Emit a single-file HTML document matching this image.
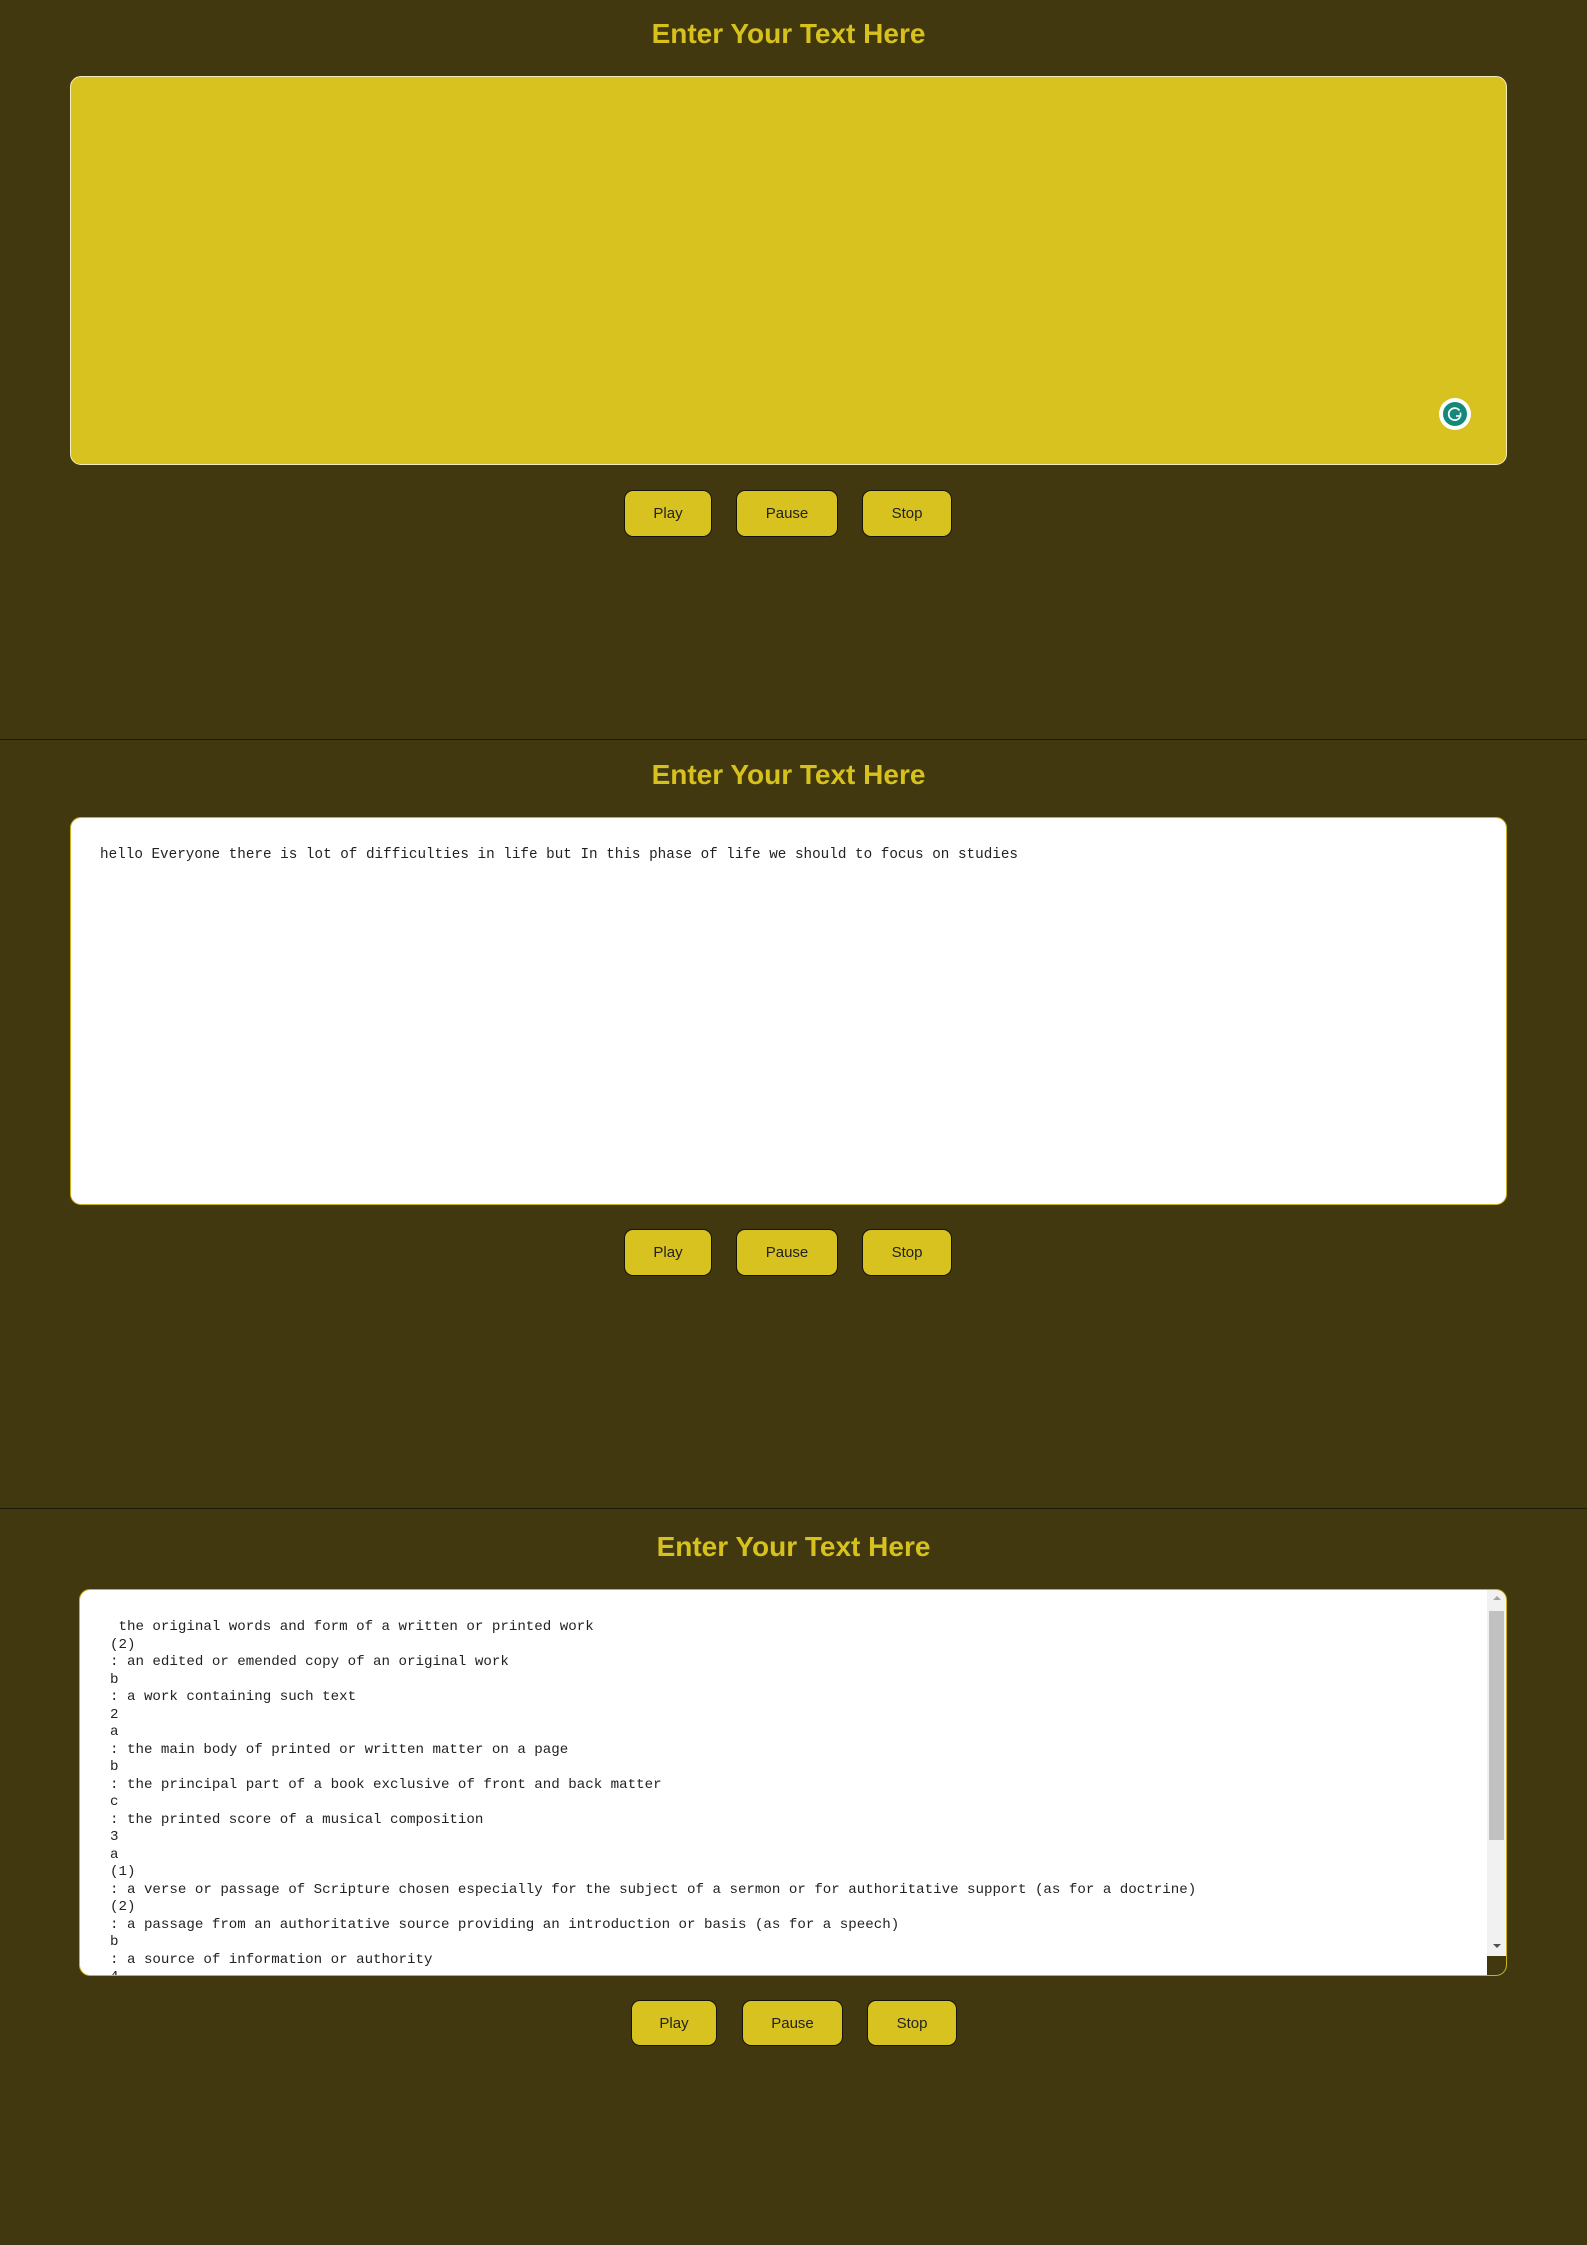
<!DOCTYPE html>
<html><head><meta charset="utf-8">
<style>
html,body{margin:0;padding:0}
body{width:1587px;height:2245px;background:#423810;position:relative;overflow:hidden;font-family:"Liberation Sans",Arial,sans-serif}
.t{position:absolute;left:-5px;width:1587px;text-align:center;color:#d6c11d;font-weight:bold;font-size:28px;line-height:32px}
.ta{position:absolute;box-sizing:border-box;border-radius:11px;overflow:hidden}
.btn{position:absolute;box-sizing:border-box;background:#d8c21f;border:1.5px solid #15130a;border-radius:9px;color:#222;font-size:15px;display:flex;align-items:center;justify-content:center}
.div{position:absolute;left:0;width:1587px;height:1px;background:#1c1a0a}
.mono{font-family:"Liberation Mono","DejaVu Sans Mono",monospace;font-size:14.3px;color:#222;white-space:pre;position:absolute}
</style></head><body>

<div class="t" style="top:18px">Enter Your Text Here</div>
<div class="ta" style="left:70px;top:76px;width:1437px;height:389px;background:#d8c21f;border:1.5px solid #f2ecc0"></div>
<div style="position:absolute;left:1439px;top:398px;width:32px;height:32px;border-radius:50%;background:#fff"></div>
<div style="position:absolute;left:1443px;top:402px;width:24px;height:24px;border-radius:50%;background:#14897a"></div>
<svg style="position:absolute;left:1443px;top:402px" width="24" height="24" viewBox="0 0 24 24"><path d="M16.5 8.5A6 6 0 1 0 17 15" fill="none" stroke="#fff" stroke-width="1.8"/><path d="M13 14h4.5v-3.5" fill="none" stroke="#fff" stroke-width="1.6"/></svg>
<div class="btn" style="left:624px;top:490px;width:88px;height:47px">Play</div>
<div class="btn" style="left:736px;top:490px;width:102px;height:47px">Pause</div>
<div class="btn" style="left:862px;top:490px;width:90px;height:47px">Stop</div>

<div class="div" style="top:739px"></div>

<div class="t" style="top:759px">Enter Your Text Here</div>
<div class="ta" style="left:70px;top:817px;width:1437px;height:388px;background:#fff;border:1.5px solid #c9b21a"></div>
<div class="mono" style="left:100px;top:846px;line-height:18px">hello Everyone there is lot of difficulties in life but In this phase of life we should to focus on studies</div>
<div class="btn" style="left:624px;top:1229px;width:88px;height:47px">Play</div>
<div class="btn" style="left:736px;top:1229px;width:102px;height:47px">Pause</div>
<div class="btn" style="left:862px;top:1229px;width:90px;height:47px">Stop</div>

<div class="div" style="top:1508px"></div>

<div class="t" style="top:1531px;left:0px">Enter Your Text Here</div>
<div class="ta" style="left:79px;top:1589px;width:1428px;height:387px;background:#fff;border:1.5px solid #c9b21a">
<div class="mono" style="left:30px;top:29px;line-height:17.5px;font-size:14.15px"> the original words and form of a written or printed work
(2)
: an edited or emended copy of an original work
b
: a work containing such text
2
a
: the main body of printed or written matter on a page
b
: the principal part of a book exclusive of front and back matter
c
: the printed score of a musical composition
3
a
(1)
: a verse or passage of Scripture chosen especially for the subject of a sermon or for authoritative support (as for a doctrine)
(2)
: a passage from an authoritative source providing an introduction or basis (as for a speech)
b
: a source of information or authority
4</div>
<div style="position:absolute;right:0;top:0;width:19px;height:366px;background:#f1f1f1"></div>
<div style="position:absolute;right:2px;top:21px;width:15px;height:229px;background:#c1c1c1"></div>
<div style="position:absolute;right:5px;top:6px;width:0;height:0;border-left:4px solid transparent;border-right:4px solid transparent;border-bottom:4px solid #a3a3a3"></div>
<div style="position:absolute;right:5px;top:354px;width:0;height:0;border-left:4px solid transparent;border-right:4px solid transparent;border-top:4px solid #505050"></div>
<div style="position:absolute;right:0;top:366px;width:19px;height:21px;background:#423810"></div>
</div>
<div class="btn" style="left:631px;top:2000px;width:86px;height:46px">Play</div>
<div class="btn" style="left:742px;top:2000px;width:101px;height:46px">Pause</div>
<div class="btn" style="left:867px;top:2000px;width:90px;height:46px">Stop</div>

</body></html>
